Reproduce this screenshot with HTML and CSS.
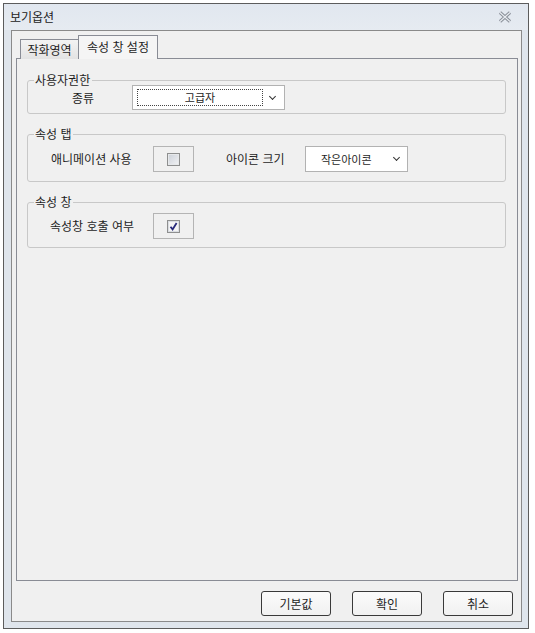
FILE: index.html
```html
<!DOCTYPE html>
<html lang="ko">
<head>
    <meta charset="UTF-8">
    <title>보기옵션</title>
    <link rel="stylesheet" href="styles.css">
</head>
<body>

    <div class="window">
        <div class="titlebar">
            <span class="title">보기옵션</span>
            <!-- 닫기 버튼 -->
            <svg class="close" width="14" height="12" viewBox="0 0 14 12">
                <path d="M2 1.5 L12 10.5 M12 1.5 L2 10.5" stroke="#8a9099" stroke-width="3.2" fill="none"/>
                <path d="M2 1.5 L12 10.5 M12 1.5 L2 10.5" stroke="#e9edf2" stroke-width="1.2" fill="none"/>
            </svg>
        </div>

        <div class="frame">
            <div class="client">
                <div class="tabs">
                    <div class="tab">작화영역</div>
                    <div class="tab active">속성 창 설정</div>
                </div>

                <div class="panel">
                    <fieldset class="group group-user">
                        <legend>사용자권한</legend>
                        <div class="row">
                            <span class="label label-kind">종류</span>
                            <div class="combo combo-wide">
                                <span class="focus">고급자</span>
                                <span class="chevron"></span>
                            </div>
                        </div>
                    </fieldset>

                    <fieldset class="group group-tab">
                        <legend>속성 탭</legend>
                        <div class="row">
                            <span class="label label-anim">애니메이션 사용</span>
                            <div class="check-frame">
                                <span class="check"></span>
                            </div>
                            <span class="label label-icon">아이콘 크기</span>
                            <div class="combo combo-small">
                                <span class="combo-text">작은아이콘</span>
                                <span class="chevron"></span>
                            </div>
                        </div>
                    </fieldset>

                    <fieldset class="group group-window">
                        <legend>속성 창</legend>
                        <div class="row">
                            <span class="label label-call">속성창 호출 여부</span>
                            <div class="check-frame">
                                <span class="check checked">
                                    <svg width="9" height="9" viewBox="0 0 9 9">
                                        <path d="M1.5 4.8 L3.6 7.4 L7.6 1" stroke="#27297a" stroke-width="1.8" fill="none"/>
                                    </svg>
                                </span>
                            </div>
                        </div>
                    </fieldset>
                </div>

                <div class="buttons">
                    <button>기본값</button>
                    <button>확인</button>
                    <button>취소</button>
                </div>
            </div>
        </div>
    </div>

</body>
</html>
```

FILE: styles.css
```css
body {
    margin: 0;
    padding: 3px;
    font-family: "Noto Sans CJK KR", "Noto Sans", sans-serif;
    font-size: 12px;
    color: #1e1e1e;
    background-color: #ffffff;
}

.window {
    box-sizing: border-box;
    width: 526px;
    height: 626px;
    border: 1px solid #5c5c5c;
    background-color: #dfe5ec;
    display: flex;
    flex-direction: column;
}

.titlebar {
    height: 26px;
    display: flex;
    align-items: center;
    justify-content: space-between;
    padding: 0 16px 0 6px;
    background: linear-gradient(#e1e7ef, #e6ebf1);
}

.title {
    line-height: 14px;
    color: #222;
}

.close {
    display: block;
}

.frame {
    flex: 1;
    padding: 0 6px 6px 7px;
    display: flex;
}

.client {
    flex: 1;
    border: 1px solid #8a8a8a;
    background-color: #f0f0f0;
    display: flex;
    flex-direction: column;
}

.tabs {
    display: flex;
    align-items: flex-end;
    padding: 4px 0 0 8px;
    height: 23px;
}

.tab {
    height: 20px;
    padding: 0 6px;
    border: 1px solid #898c95;
    border-bottom: none;
    background: linear-gradient(#f3f3f3, #e3e3e3);
    line-height: 20px;
    box-sizing: border-box;
    width: 59px;
    text-align: center;
    position: relative;
    top: 1px;
}

.tab.active {
    height: 24px;
    width: 80px;
    margin-left: -1px;
    background: #f5f5f5;
    line-height: 22px;
    z-index: 1;
}

.panel {
    box-sizing: border-box;
    height: 523px;
    margin: 0 3px 0 4px;
    border: 1px solid #898c95;
    padding: 16px 11px 0 10px;
}

.group {
    margin: 0 0 15px;
    border: 1px solid #c8c8c8;
    border-radius: 3px;
    padding: 0 10px 3px 0;
}

.group legend {
    margin-left: 6px;
    padding: 0 2px 0 1px;
    line-height: 10px;
    height: 10px;
}

.group-tab {
    padding-top: 7px;
    padding-bottom: 9px;
}

.group-window {
    padding-top: 6px;
    padding-bottom: 8px;
}

.row {
    display: flex;
    align-items: center;
}

.label {
    line-height: 14px;
    white-space: nowrap;
}

.label-kind {
    margin-left: 44px;
    width: 60px;
}

.label-anim {
    margin-left: 23px;
    width: 102px;
}

.label-icon {
    margin-left: 32px;
    width: 79px;
}

.label-call {
    margin-left: 22px;
    width: 103px;
}

.combo {
    box-sizing: border-box;
    display: flex;
    align-items: center;
    background-color: #ffffff;
    border: 1px solid #b2b2b2;
    font-size: 11px;
    position: relative;
}

.combo-wide {
    width: 153px;
    height: 25px;
    padding: 3px 0 3px 4px;
}

.combo-small {
    width: 103px;
    height: 26px;
    padding-left: 15px;
}

.focus {
    box-sizing: border-box;
    width: 126px;
    height: 17px;
    border: 1px dotted #444;
    text-align: center;
    line-height: 15px;
}

.combo-text {
    width: 66px;
    line-height: 14px;
}

.chevron {
    width: 4px;
    height: 4px;
    border-right: 1.5px solid #333;
    border-bottom: 1.5px solid #333;
    transform: rotate(45deg);
    margin: -3px 0 0 7px;
}

.check-frame {
    box-sizing: border-box;
    width: 41px;
    height: 26px;
    border: 1px solid #b4b4b4;
    display: flex;
    align-items: center;
    justify-content: center;
}

.check {
    box-sizing: border-box;
    width: 13px;
    height: 13px;
    border: 1px solid #8e8f8f;
    background: linear-gradient(135deg, #cbd0d8, #f2f3f5);
    box-shadow: inset 0 0 0 1px #e6e8ea;
    display: flex;
    align-items: center;
    justify-content: center;
}

.check.checked {
    background: #f4f4f4;
    box-shadow: inset 0 0 0 1px #dadde2;
}

.check svg {
    display: block;
}

.buttons {
    display: flex;
    justify-content: flex-end;
    gap: 21px;
    padding: 10px 8px 0 0;
}

button {
    box-sizing: border-box;
    width: 70px;
    height: 25px;
    border: 1px solid #3a3a3a;
    border-radius: 3px;
    background: linear-gradient(#fbfbfb, #f1f1f1);
    font-family: "Noto Sans CJK KR", "Noto Sans", sans-serif;
    font-size: 12px;
    color: #1e1e1e;
    padding: 0;
    line-height: 14px;
}
```
